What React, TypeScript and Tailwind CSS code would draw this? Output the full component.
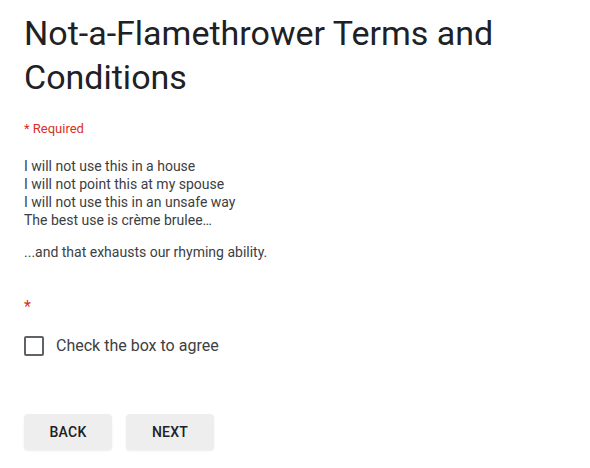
export default function App() {
  return (
    <div className="min-h-[468px] bg-white px-6 font-['Roboto',sans-serif] text-[#202124]">
      <h1 className="pt-[11px] text-[34px] font-normal leading-[44px]">
        Not-a-Flamethrower Terms and Conditions
      </h1>

      <div className="mt-[22px] text-[13px] leading-[16px] text-[#d93025]">* Required</div>

      <div className="mt-[20px] text-[14px] leading-[18px] text-[#3c4043]">
        <p>I will not use this in a house</p>
        <p>I will not point this at my spouse</p>
        <p>I will not use this in an unsafe way</p>
        <p>The best use is crème brulee…</p>
        <p className="mt-[14px]">...and that exhausts our rhyming ability.</p>
      </div>

      <div className="mt-[34px] text-[16px] leading-[24px] text-[#d93025]">*</div>

      <label className="mt-[15px] flex items-center gap-3">
        <span className="h-5 w-5 rounded-[2px] border-2 border-[#5f6368]" />
        <span className="text-[16px] leading-[24px] text-[#3c4043]">Check the box to agree</span>
      </label>

      <div className="mt-[56px] flex gap-[14px]">
        <button className="h-9 w-[88px] rounded-[4px] bg-[#eeeeee] text-[14px] font-medium uppercase tracking-[0.25px] text-[#202124] shadow-[0_1px_2px_rgba(0,0,0,0.08)]">
          Back
        </button>
        <button className="h-9 w-[88px] rounded-[4px] bg-[#eeeeee] text-[14px] font-medium uppercase tracking-[0.25px] text-[#202124] shadow-[0_1px_2px_rgba(0,0,0,0.08)]">
          Next
        </button>
      </div>
    </div>
  );
}
